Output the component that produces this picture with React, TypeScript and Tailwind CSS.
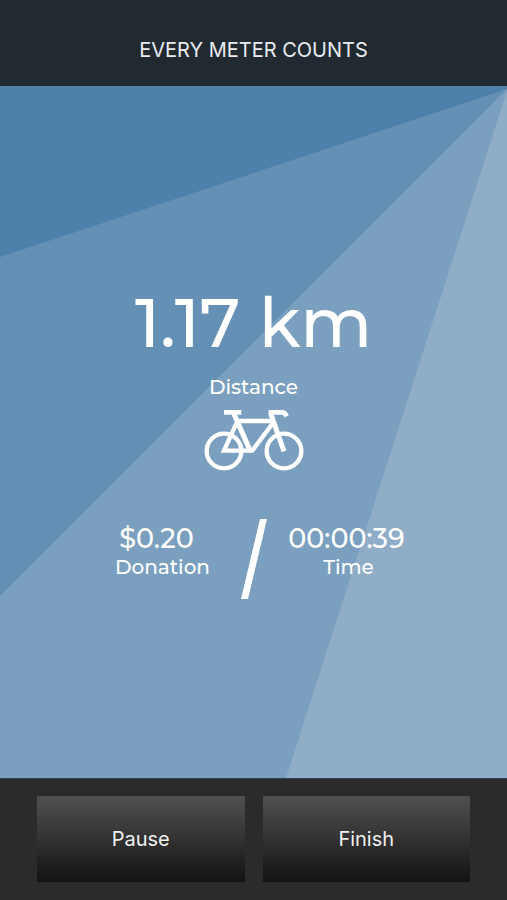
import { useState } from 'react';

const STATS = {
  distance: '1.17 km',
  donation: '$0.20',
  time: '00:00:39',
};

function RayBackground() {
  return (
    <svg
      className="absolute inset-0 h-full w-full"
      viewBox="0 0 507 692"
      preserveAspectRatio="none"
      aria-hidden="true"
    >
      <rect width="507" height="692" fill="#7b9fbe" />
      <polygon points="0,0 507,0 507,3 0,510" fill="#6390b4" />
      <polygon points="0,0 507,0 507,3 0,171" fill="#4d80aa" />
      <polygon points="507,5 507,692 286,692" fill="#90adc7" />
    </svg>
  );
}

function BikeIcon() {
  return (
    <svg
      className="mt-2 h-[62px] w-[100px]"
      viewBox="27 27 300 186"
      fill="none"
      stroke="currentColor"
      strokeWidth="13"
      role="img"
      aria-label="Bicycle"
    >
      <circle cx="87" cy="153" r="52" />
      <circle cx="267" cy="153" r="52" />
      {/* Saddle and handlebar */}
      <path d="M87 37H139" strokeWidth="14" />
      <path d="M221 37H262Q270 37 275 49" strokeWidth="14" />
      {/* Frame and fork */}
      <path d="M116 40L165 151" strokeWidth="15" />
      <path d="M126 63H234" />
      <path d="M124 70L87 152H172L236 66" />
      <path d="M227 40L267 154" strokeWidth="15" />
    </svg>
  );
}

export default function App() {
  const [paused, setPaused] = useState(false);
  const [finished, setFinished] = useState(false);

  const buttonClass =
    'h-[86px] flex-1 bg-linear-to-b from-[#505050] via-[#323232] to-[#131313] text-xl text-[#f0f0f0] disabled:opacity-50';

  return (
    <div className="flex min-h-screen flex-col bg-[#2b2b2b] font-['Inter',sans-serif] text-white">
      {/* Header */}
      <header className="flex h-[86px] items-center justify-center bg-[#222a31] pt-3.5">
        <h1 className="text-xl text-[#e9edf2]">EVERY METER COUNTS</h1>
      </header>

      {/* Ride stats */}
      <main className="relative flex flex-1 flex-col">
        <RayBackground />
        <div className="relative flex flex-1 flex-col items-center justify-center pt-[22px] font-['Montserrat','Inter',sans-serif] font-medium">
          <p className="text-[68px] leading-[72px]">{STATS.distance}</p>
          <p className="mt-3.5 text-xl leading-7">Distance</p>
          <BikeIcon />

          <div className="mt-12 flex gap-5 text-center">
            <div className="w-[120px] pt-1.5 pl-1">
              <p className="pr-3 text-[27px] leading-7">{STATS.donation}</p>
              <p className="text-xl leading-7">Donation</p>
            </div>
            <svg className="h-20 w-[26px]" viewBox="0 0 26 80" fill="currentColor" aria-hidden="true">
              <polygon points="19,0 26,0 7,80 0,80" />
            </svg>
            <div className="w-[120px] pt-1.5">
              <p className="text-[27px] leading-7">{STATS.time}</p>
              <p className="pl-1 text-xl leading-7">Time</p>
            </div>
          </div>
        </div>
      </main>

      {/* Controls */}
      <footer className="flex gap-[18px] border-t border-[#34434f] px-[37px] pt-[17px] pb-[18px]">
        <button type="button" className={buttonClass} disabled={finished} onClick={() => setPaused(!paused)}>
          {paused ? 'Resume' : 'Pause'}
        </button>
        <button type="button" className={buttonClass} disabled={finished} onClick={() => setFinished(true)}>
          Finish
        </button>
      </footer>
    </div>
  );
}
